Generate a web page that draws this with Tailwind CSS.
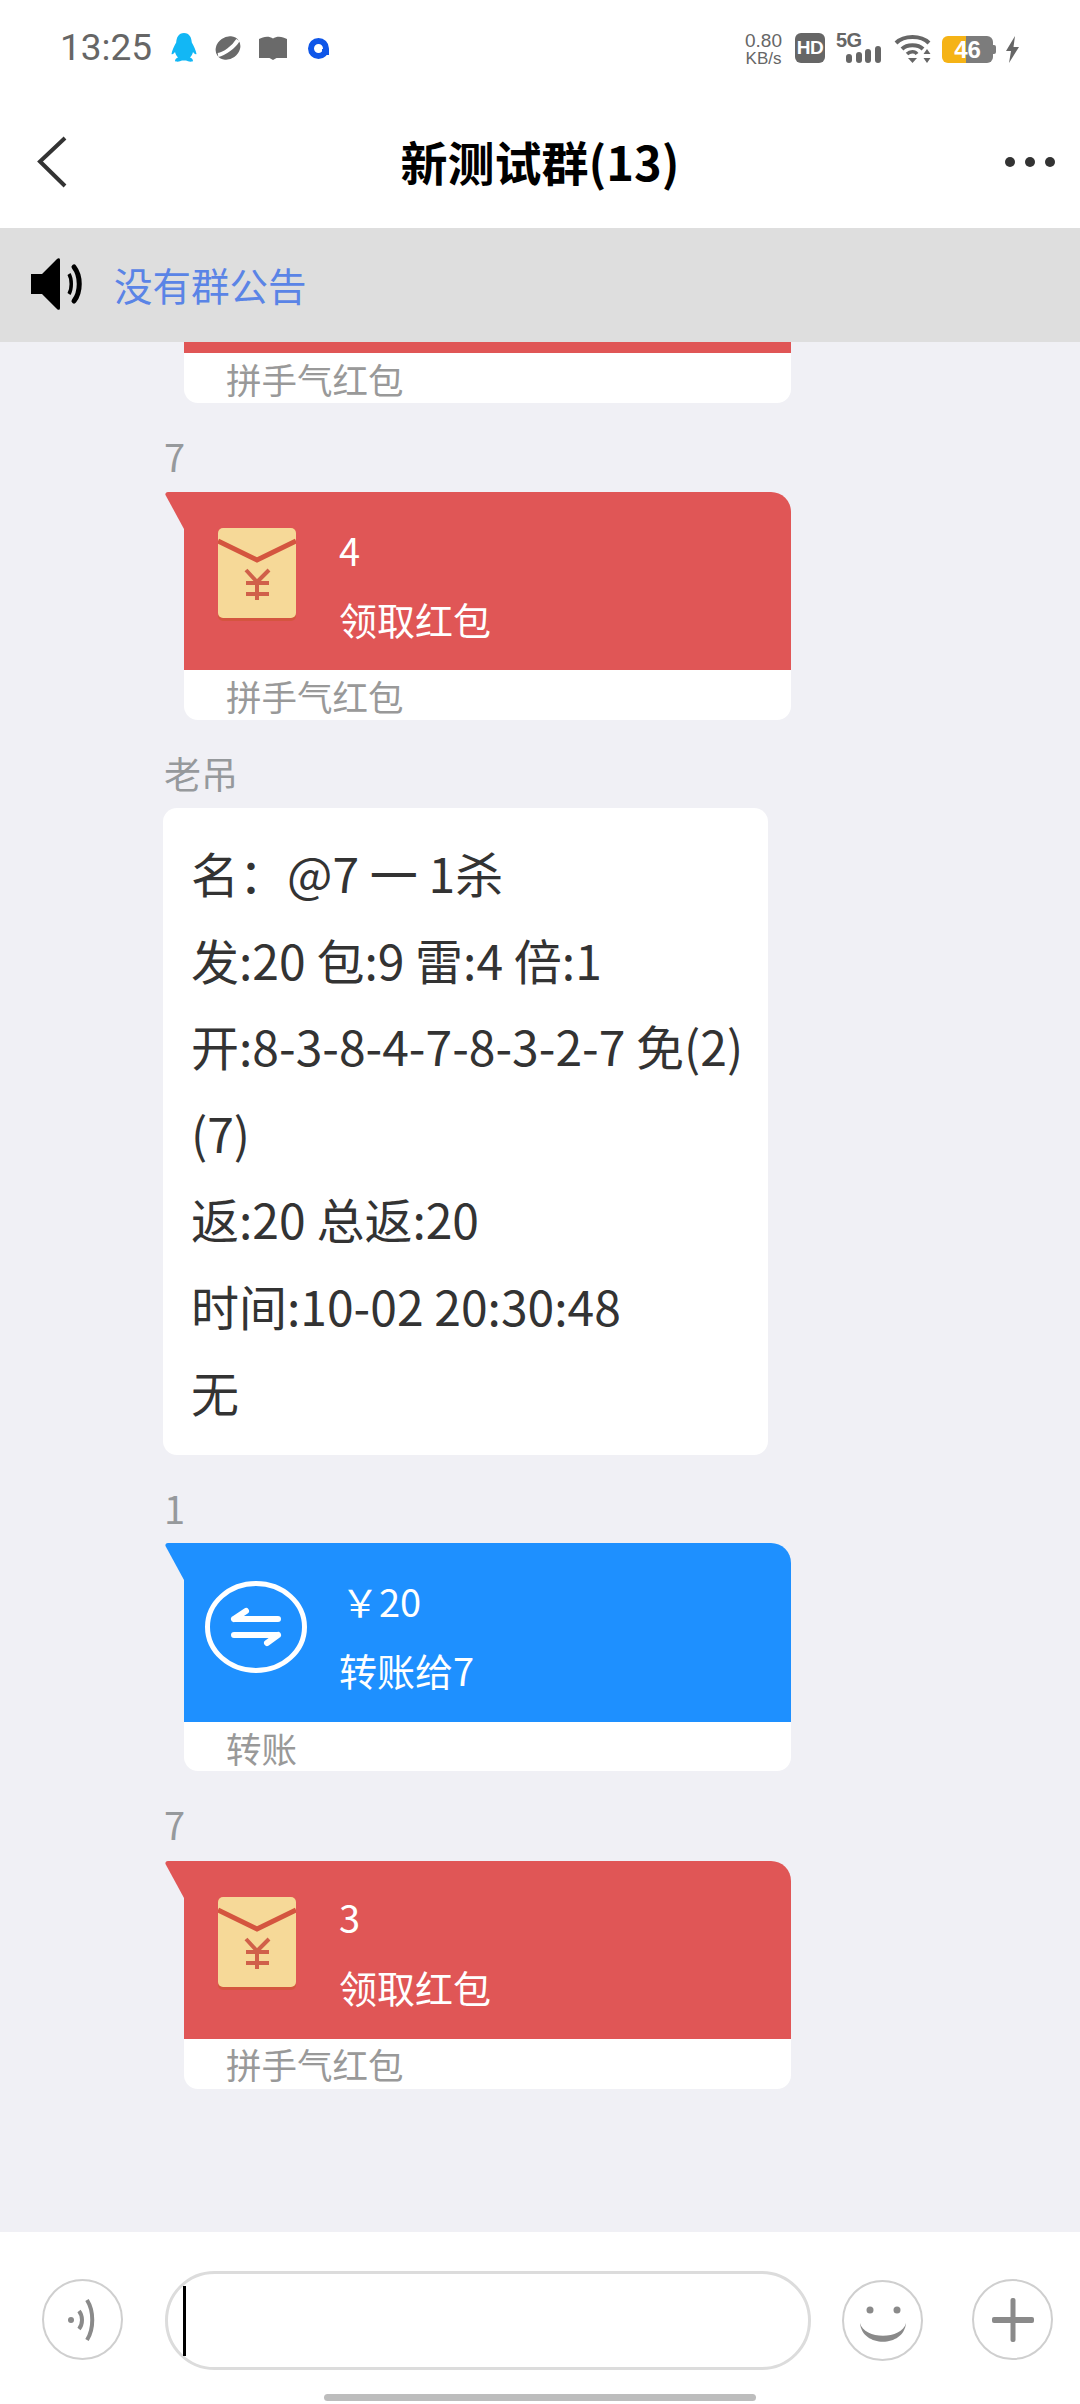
<!DOCTYPE html>
<html lang="zh">
<head>
<meta charset="utf-8">
<script src="https://cdn.jsdelivr.net/npm/@tailwindcss/browser@4"></script>
<title>新测试群</title>
</head>
<body class="m-0">
<div class="w-[1080px] h-[2404px] flex flex-col overflow-hidden bg-[#f0f0f5] font-['Noto_Sans_CJK_SC',sans-serif]">

  <!-- top: status + title -->
  <header class="h-[228px] shrink-0 bg-white flex flex-col">
    <div class="h-[96px] pt-[33px] pl-[60px] pr-[61px] flex items-start text-[#666] font-['Roboto',sans-serif]">
      <span class="text-[37px] leading-[30px] w-[111px]">13:25</span>
      <svg class="w-[26px] h-[29px] mr-[16px]" viewBox="0 0 26 29"><path fill="#12b7f5" d="M13 0c5.500 0 7.500 4.500 7.800 9.500 2 3.500 4.200 8 4.700 11.500-1 1-2.500-.5-3.500-2-.5 2-1.500 4-3 5.500 1.500.5 3 1.500 3 3.500 0 .6-3 1-5 .3-1.500-.8-3-.8-4-.8s-2.500 0-4 .8c-2 .7-5 .3-5-.3 0-2 1.500-3 3-3.500-1.500-1.500-2.500-3.500-3-5.500-1 1.500-2.500 3-3.500 2 .5-3.500 2.700-8 4.700-11.500C5.500 4.500 7.500 0 13 0z"/></svg>
      <svg class="w-[30px] h-[26px] mt-[2px] mr-[16px]" viewBox="0 0 30 26"><ellipse cx="15" cy="13" rx="13" ry="11" transform="rotate(-35 15 13)" fill="#6a6a6a"/><path d="M5 20C11 19 21 12 25 5" stroke="#fff" stroke-width="4" fill="none"/></svg>
      <svg class="w-[28px] h-[24px] mt-[3px] mr-[21px]" viewBox="0 0 28 24"><path fill="#6a6a6a" d="M0 3c4-2.500 10-3.500 14-.5 4-3 10-2 14 .5v19H17.500L14 24l-3.500-2H0z"/></svg>
      <svg class="w-[21px] h-[21px] mt-[5px]" viewBox="0 0 21 21"><circle cx="10.500" cy="10.500" r="7.500" fill="none" stroke="#0f56e8" stroke-width="6"/><path d="M14 11h7v6h-7z" fill="#0f56e8"/></svg>
      <div class="ml-auto w-[37px] mr-[13px] flex flex-col items-center text-[#666] font-['Liberation_Sans',sans-serif]">
        <span class="text-[19px] leading-[15px]">0.80</span>
        <span class="text-[17px] leading-[13px] mt-[4px]">KB/s</span>
      </div>
      <div class="w-[30px] h-[30px] rounded-[6px] bg-[#666] text-white text-[19px] leading-[30px] font-black text-center mr-[11px] tracking-[-0.5px] font-['Liberation_Sans',sans-serif]">HD</div>
      <div class="relative w-[45px] h-[30px] mr-[13px]">
        <span class="block text-[#666] text-[20px] leading-[15px] font-black tracking-[-0.5px] font-['Liberation_Sans',sans-serif]">5G</span>
        <svg class="absolute left-[10px] top-[13px] w-[35px] h-[17px]" viewBox="0 0 35 17" fill="#666"><rect x="0" y="8" width="6" height="9" rx="3"/><rect x="10" y="6" width="6" height="11" rx="3"/><rect x="19" y="3" width="6" height="14" rx="3"/><rect x="29" y="0" width="6" height="17" rx="3"/></svg>
      </div>
      <svg class="w-[37px] h-[29px] mt-[1px] mr-[11px]" viewBox="0 0 37 29" fill="none"><path d="M2 9C10 1 27 1 35 9" stroke="#666" stroke-width="4"/><path d="M8 15C13 10 24 10 29 15" stroke="#666" stroke-width="4"/><path d="M13 20c3-3 8-3 10 0" stroke="#666" stroke-width="3.500"/><path d="M14 24h9l-4.500 5z" fill="#666"/><path d="M33 15l3.500 5h-7zM33 29l3.500-5h-7z" fill="#666"/></svg>
      <div class="relative w-[54px] h-[27px] mt-[3px] mr-[10px]">
        <div class="absolute left-0 top-0 w-[51px] h-[27px] rounded-[6px] overflow-hidden flex">
          <div class="w-[24px] bg-[#f5b316]"></div><div class="flex-1 bg-[#7c7c7c]"></div>
        </div>
        <div class="absolute right-0 top-[9px] w-[3px] h-[9px] rounded-r-[2px] bg-[#7c7c7c]"></div>
        <span class="absolute left-0 top-0 w-[51px] text-center text-white text-[24px] leading-[27px] font-bold font-['Liberation_Sans',sans-serif]">46</span>
      </div>
      <svg class="w-[13px] h-[27px] mt-[3px]" viewBox="0 0 13 27"><path fill="#666" d="M9 0 0 15h5l-2 12 10-16H7.500z"/></svg>
    </div>
    <div class="relative flex-1 flex items-center justify-center">
      <svg class="absolute left-[36px] top-[40px] w-[32px] h-[52px]" viewBox="0 0 32 52" fill="none"><path d="M29 2 4 25.500 29 50" stroke="#333" stroke-width="4"/></svg>
      <h1 class="text-[47px] leading-[60px] font-bold text-black pb-[2px]">新测试群(13)</h1>
      <div class="absolute right-[25px] top-[61px] flex gap-[10px]">
        <span class="w-[10px] h-[10px] rounded-full bg-[#333]"></span><span class="w-[10px] h-[10px] rounded-full bg-[#333]"></span><span class="w-[10px] h-[10px] rounded-full bg-[#333]"></span>
      </div>
    </div>
  </header>

  <!-- notice -->
  <div class="h-[114px] shrink-0 bg-[#dedede] flex items-center pl-[31px] relative">
    <svg class="w-[53px] h-[52px] mr-[30px] -mt-[2px]" viewBox="0 0 53 52"><path fill="#000" d="M0 16h11L26 1c1.500-1.500 3-1 3 1v48c0 2-1.500 2.500-3 1L11 36H0z"/><path d="M38 16c3 5 3 15 0 20" stroke="#000" stroke-width="3.500" fill="none"/><path d="M43 9c7 9 7 25 0 34" stroke="#000" stroke-width="5" fill="none" stroke-linecap="round"/></svg>
    <span class="text-[38.500px] leading-[50px] text-[#5a84e6] -mt-[2px]">没有群公告</span>
  </div>

  <!-- messages -->
  <main class="flex-1 overflow-hidden">

    <!-- bubble scrolled partly under the notice -->
    <div class="relative ml-[165px] w-[626px] h-[228px] -mt-[167px]">
      <div class="ml-[19px] h-[178px] bg-[#e05656] rounded-tr-[20px]"></div>
      <div class="ml-[19px] h-[50px] bg-white rounded-b-[14px] pl-[42px] pt-[3px] text-[35.500px] leading-[46px] text-[#999]">拼手气红包</div>
    </div>

    <!-- red packet 4 -->
    <p class="mt-[35px] ml-[164px] mb-[14px] h-[40px] text-[38px] leading-[36px] text-[#96999c]">7</p>
    <div class="relative ml-[165px] w-[626px] h-[228px]">
      <svg class="absolute left-0 top-0 w-[20px] h-[37px]" viewBox="0 0 20 37"><path fill="#e05656" d="M20 0H3C1 0 0 1.500.5 3L19 37h1z"/></svg>
      <div class="ml-[19px] h-[178px] bg-[#e05656] rounded-tr-[20px] flex pt-[36px] pl-[34px] text-white">
        <svg class="w-[78px] h-[93px] shrink-0" viewBox="0 0 78 93"><rect width="78" height="93" rx="5" fill="#d4553f"/><rect width="78" height="90" rx="5" fill="#f6d998"/><path d="M0 13 39 32 78 13" fill="none" stroke="#d4553f" stroke-width="5"/><path d="M28 42 39 54 51 42M28 55H51M28 66H51M39 54V72" fill="none" stroke="#d0604a" stroke-width="4"/></svg>
        <div class="ml-[43px] -mt-[12px]">
          <p class="text-[38px] leading-[68px]">4</p>
          <p class="text-[38px] leading-[68px] mt-[1px]">领取红包</p>
        </div>
      </div>
      <div class="ml-[19px] h-[50px] bg-white rounded-b-[14px] pl-[42px] pt-[3px] text-[35.500px] leading-[46px] text-[#999]">拼手气红包</div>
    </div>

    <!-- text card -->
    <p class="mt-[35px] ml-[164px] mb-[13px] h-[40px] text-[37px] leading-[36px] text-[#96999c]">老吊</p>
    <div class="ml-[163px] w-[605px] h-[647px] bg-white rounded-[14px] pl-[28px] pt-[21px] text-[48px] leading-[86.500px] text-[#333]">
      <p>名：@7 一 1杀</p>
      <p>发:20 包:9 雷:4 倍:1</p>
      <p>开:8-3-8-4-7-8-3-2-7 免(2)</p>
      <p>(7)</p>
      <p>返:20 总返:20</p>
      <p>时间:10-02 20:30:48</p>
      <p>无</p>
    </div>

    <!-- transfer -->
    <p class="mt-[35px] ml-[164px] mb-[13px] h-[40px] text-[38px] leading-[36px] text-[#96999c]">1</p>
    <div class="relative ml-[165px] w-[626px] h-[228px]">
      <svg class="absolute left-0 top-0 w-[20px] h-[37px]" viewBox="0 0 20 37"><path fill="#1e90ff" d="M20 0H3C1 0 0 1.500.5 3L19 37h1z"/></svg>
      <div class="ml-[19px] h-[179px] bg-[#1e90ff] rounded-tr-[20px] flex pt-[38px] pl-[21px] text-white">
        <svg class="w-[102px] h-[92px] shrink-0" viewBox="0 0 102 92" fill="none"><ellipse cx="51" cy="46" rx="48.500" ry="43.500" stroke="#fff" stroke-width="5"/><path d="M29 38H73M29 38 41 30M29 54H73M73 54 62 62" stroke="#fff" stroke-width="6" stroke-linecap="round"/></svg>
        <div class="ml-[32px] -mt-[14px]">
          <p class="text-[38px] leading-[68px] pl-[2px]">￥20</p>
          <p class="text-[38px] leading-[68px] mt-[1px]">转账给7</p>
        </div>
      </div>
      <div class="ml-[19px] h-[49px] bg-white rounded-b-[14px] pl-[42px] pt-[3px] text-[35.500px] leading-[46px] text-[#999]">转账</div>
    </div>

    <!-- red packet 3 -->
    <p class="mt-[36px] ml-[164px] mb-[14px] h-[40px] text-[38px] leading-[34px] text-[#96999c]">7</p>
    <div class="relative ml-[165px] w-[626px] h-[228px]">
      <svg class="absolute left-0 top-0 w-[20px] h-[37px]" viewBox="0 0 20 37"><path fill="#e05656" d="M20 0H3C1 0 0 1.500.5 3L19 37h1z"/></svg>
      <div class="ml-[19px] h-[178px] bg-[#e05656] rounded-tr-[20px] flex pt-[36px] pl-[34px] text-white">
        <svg class="w-[78px] h-[93px] shrink-0" viewBox="0 0 78 93"><rect width="78" height="93" rx="5" fill="#d4553f"/><rect width="78" height="90" rx="5" fill="#f6d998"/><path d="M0 13 39 32 78 13" fill="none" stroke="#d4553f" stroke-width="5"/><path d="M28 42 39 54 51 42M28 55H51M28 66H51M39 54V72" fill="none" stroke="#d0604a" stroke-width="4"/></svg>
        <div class="ml-[43px] -mt-[14px]">
          <p class="text-[38px] leading-[68px]">3</p>
          <p class="text-[38px] leading-[68px] mt-[2px]">领取红包</p>
        </div>
      </div>
      <div class="ml-[19px] h-[50px] bg-white rounded-b-[14px] pl-[42px] pt-[2px] text-[35.500px] leading-[46px] text-[#999]">拼手气红包</div>
    </div>
  </main>

  <!-- input bar -->
  <footer class="relative h-[172px] shrink-0 bg-white">
    <div class="flex items-start pt-[39px] pl-[42px]">
      <div class="mt-[8px] w-[81px] h-[81px] rounded-full border-2 border-[#cfcfcf] flex items-center justify-center mr-[42px]">
        <svg class="w-[32px] h-[44px]" viewBox="0 0 32 44" fill="none" stroke="#8a8a8a"><circle cx="4" cy="22" r="3" fill="#8a8a8a" stroke="none"/><path d="M12 13c4 5 4 13 0 18" stroke-width="4"/><path d="M20 2c7 11 7 29 0 40" stroke-width="4"/></svg>
      </div>
      <div class="w-[646px] h-[99px] rounded-[50px] border-[3px] border-[#dcdcdc] pl-[15px] pt-[12px] mr-[31px]">
        <div class="w-[3px] h-[70px] bg-black"></div>
      </div>
      <div class="mt-[9px] w-[81px] h-[81px] rounded-full border-2 border-[#cfcfcf] flex items-center justify-center mr-[49px]">
        <svg class="w-[48px] h-[44px]" viewBox="0 0 48 44" fill="none"><circle cx="11" cy="11" r="3.500" fill="#8a8a8a"/><circle cx="38" cy="11" r="3.500" fill="#8a8a8a"/><path d="M1 24C3 49 45 49 47 24 43 41 5 41 1 24z" fill="#8a8a8a"/></svg>
      </div>
      <div class="mt-[8px] w-[81px] h-[81px] rounded-full border-2 border-[#cfcfcf] flex items-center justify-center">
        <svg class="w-[44px] h-[44px]" viewBox="0 0 44 44" fill="#8a8a8a"><rect x="1" y="19" width="42" height="6" rx="2"/><rect x="19.500" y="0" width="5" height="44" rx="2"/></svg>
      </div>
    </div>
    <div class="absolute left-[324px] bottom-[3px] w-[432px] h-[7px] rounded-full bg-[#bdbdbd]"></div>
  </footer>
</div>
</body>
</html>
